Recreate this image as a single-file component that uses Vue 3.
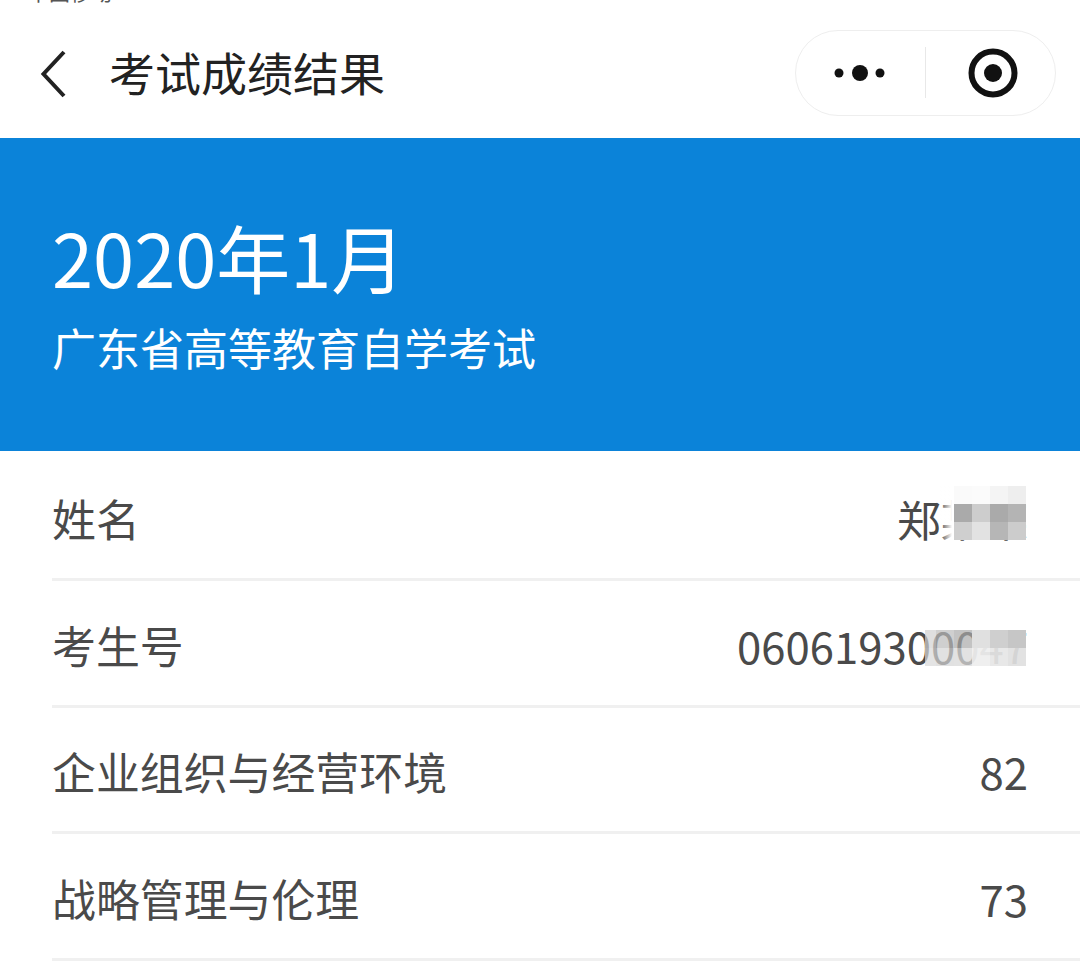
<template>
  <div class="page">
    <div class="status"><span>中国移动</span></div>
    <header class="nav">
      <svg class="back" width="30" height="48" viewBox="0 0 30 48">
        <polyline points="24,2 3.5,24 24,46" fill="none" stroke="#222" stroke-width="4" />
      </svg>
      <h1 class="nav-title">考试成绩结果</h1>
      <div class="capsule">
        <div class="capsule-btn dots">
          <svg width="54" height="20" viewBox="0 0 54 20">
            <circle cx="6" cy="10" r="4.5" fill="#111" />
            <circle cx="27" cy="10" r="8" fill="#111" />
            <circle cx="47" cy="10" r="4.5" fill="#111" />
          </svg>
        </div>
        <div class="capsule-line"></div>
        <div class="capsule-btn target">
          <svg width="50" height="50" viewBox="0 0 50 50">
            <circle cx="25" cy="25" r="21.5" fill="none" stroke="#111" stroke-width="6" />
            <circle cx="25" cy="25" r="9" fill="#111" />
          </svg>
        </div>
      </div>
    </header>

    <section class="banner">
      <div class="banner-date">2020年1月</div>
      <div class="banner-name">广东省高等教育自学考试</div>
    </section>

    <ul class="rows">
      <li v-for="row in rows" :key="row.label" class="row">
        <span class="label">{{ row.label }}</span>
        <span class="value">
          {{ row.value }}
          <span v-if="row.mask" class="mask" :class="row.mask.cls">
            <i v-for="(c, i) in row.mask.cells" :key="i" :style="{ background: c }"></i>
          </span>
        </span>
      </li>
    </ul>
  </div>
</template>

<script setup>
// pixelated cover over the private part of name and number
const nameMask = {
  cls: 'mask-name',
  cells: ['#fafafa', '#fbfbfb', '#f4f4f4', '#eeeeee',
    '#aaaaaa', '#cdcdcd', '#aaaaaa', '#b4b4b4',
    '#cfcfcf', '#e2e2e2', '#b6b6b6', '#cccccc']
};
// first cells are see-through, the zeros stay faintly visible like in the original
const idMask = {
  cls: 'mask-id',
  cells: ['rgba(210,210,210,.7)', 'rgba(186,186,186,.7)', 'rgba(170,170,170,.7)', '#e0e0e0', '#cfcfcf', '#c6c6c6',
    'rgba(216,216,216,.7)', 'rgba(212,212,212,.7)', 'rgba(216,216,216,.75)', 'rgba(238,238,238,.94)', 'rgba(230,230,230,.92)', 'rgba(224,224,224,.92)']
};

const rows = [
  { label: '姓名', value: '郑某某', mask: nameMask },
  { label: '考生号', value: '060619300047', mask: idMask },
  { label: '企业组织与经营环境', value: '82' },
  { label: '战略管理与伦理', value: '73' }
];
</script>

<style>
html, body {
  margin: 0;
  background: #fff;
}
</style>

<style scoped>
.page {
  width: 1080px;
  height: 971px;
  overflow: hidden;
  background: #fff;
  font-family: "Noto Sans CJK SC", "Noto Sans", sans-serif;
}

.status {
  height: 3px;
  padding-left: 28px;
  overflow: hidden;
  display: flex;
  align-items: flex-end;
  font-size: 21px;
  line-height: 24px;
  color: #555;
}

.nav {
  height: 135px;
  display: flex;
  align-items: center;
  padding: 0 24px 0 40px;
  box-sizing: border-box;
}

.back {
  margin-top: 7px;
}

.nav-title {
  margin: 0 0 0 39px;
  font-size: 46px;
  font-weight: 400;
  color: #222;
  line-height: 1;
  flex: 1;
}

.capsule {
  width: 261px;
  height: 86px;
  box-sizing: border-box;
  border: 1.5px solid #eeeeee;
  border-radius: 43px;
  display: flex;
  align-items: center;
  margin-top: 4px;
}

.capsule-btn {
  display: flex;
  align-items: center;
  justify-content: center;
}

.dots {
  flex: 0 0 128.5px;
}

.target {
  flex: 1;
  padding-left: 6px;
}

.capsule-line {
  width: 1px;
  height: 51px;
  background: #e8e8e8;
}

.banner {
  height: 313px;
  box-sizing: border-box;
  padding: 73px 52px 0;
  background: #0b83d9;
  color: #fff;
}

.banner-date {
  font-size: 74px;
  line-height: 90px;
}

.banner-name {
  margin-top: 16px;
  font-size: 44px;
  line-height: 60px;
}

.rows {
  list-style: none;
  margin: 0;
  padding: 3.5px 0 0 52px;
}

.row {
  height: 126.6px;
  box-sizing: border-box;
  padding: 4px 52px 0 0;
  border-bottom: 3px solid #f0f0f0;
  display: flex;
  align-items: center;
  justify-content: space-between;
  color: #4a4a4a;
  font-size: 43.7px;
}

.label {
  font-size: 43.9px;
}

.value {
  position: relative;
}

.mask {
  position: absolute;
  display: grid;
  grid-auto-rows: 18px;
  filter: blur(0.6px);
}

.mask i {
  display: block;
}

.mask-name {
  right: 2px;
  top: 0;
  width: 86px;
  height: 54px;
  padding-left: 14px;
  box-sizing: border-box;
  background: linear-gradient(90deg, rgba(255, 255, 255, 0), #fff 12px);
  grid-template-columns: repeat(4, 18px);
}

.mask-id {
  right: 2px;
  top: 17px;
  grid-template-columns: 11px repeat(5, 18px);
}
</style>
